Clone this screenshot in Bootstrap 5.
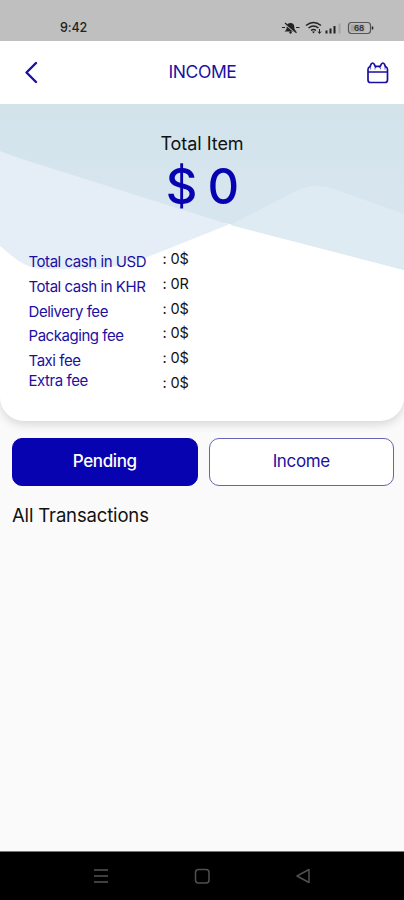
<!DOCTYPE html>
<html lang="en">
<head>
<meta charset="utf-8">
<meta name="viewport" content="width=device-width, initial-scale=1">
<title>Income</title>
<link href="https://cdn.jsdelivr.net/npm/bootstrap@5.3.0/dist/css/bootstrap.min.css" rel="stylesheet">
<style>
  :root { --brand: #0803b0; --ink: #1c10a0; }
  body { font-family: Inter, "Liberation Sans", sans-serif; background: #fafafa; color: #111; }
  .screen { height: 900px; overflow: hidden; }
  .status { height: 41px; background: #bfbfbf; padding: 15px 30px 0 60px; }
  .clock { font-size: 12.5px; line-height: 26px; color: #222; font-weight: 500; letter-spacing: -.1px; }
  .topbar { height: 63px; padding: 0 14px 0 20px; color: var(--ink); z-index: 1; }
  .topbar h1 { font-size: 17.5px; letter-spacing: -.4px; font-weight: 400; line-height: 24px; margin: 0 0 2px -5px; }
  .summary { height: 317px; border-radius: 0 0 24px 24px; box-shadow: 0 4px 8px rgba(0,0,0,.13); overflow: hidden; }
  .total-label { font-size: 18px; line-height: 24px; padding-top: 28px; letter-spacing: -.05px; }
  .total-value { font-size: 49px; line-height: 60px; padding-top: 1px; color: var(--brand); font-weight: 500; letter-spacing: -1px; word-spacing: -1px; }
  .fees { padding: 0 28.500px; margin-top: 32px; font-size: 15px; letter-spacing: -.45px; }
  .fee-names { width: 134px; color: var(--ink); padding-top: 1px; }
  .fee-names div { height: 24.8px; line-height: 24px; }
  .fee-names .last-fee { margin-top: -5px; }
  .fee-values { margin-top: -2px; font-size: 14.5px; letter-spacing: -.1px; }
  .fee-values div { height: 24.8px; line-height: 24px; }
  .tabs { padding: 17px 10px 0 12px; gap: 11px; }
  .tabs .btn { height: 48px; border-radius: 10px; font-size: 17px; letter-spacing: -.35px; padding: 0 0 0; border-color: #6663b4; color: var(--ink); background: #fff; }
  .tabs .btn.chosen { background: var(--brand); border-color: var(--brand); color: #fff; font-weight: 500; }
  .list-title { font-size: 18.5px; line-height: 26px; font-weight: 400; padding: 16px 12px 0; letter-spacing: -.15px; }
  .softkeys { height: 49px; background: #000; border-top: 1px solid #777; padding: 0 92px; }
</style>
</head>
<body>
<div class="screen d-flex flex-column">
  <div class="status d-flex justify-content-between flex-shrink-0">
    <span class="clock">9:42</span>
    <svg width="94" height="24" viewBox="280 15 94 24" fill="none" stroke="#222">
      <path d="M284.500 31.500h12c-1.700-1.200-2.200-2.500-2.200-4.500 0-2.400-1.400-4-3.800-4s-3.800 1.600-3.800 4c0 2-.5 3.300-2.200 4.500z" fill="#222" stroke="none"/>
      <circle cx="290.500" cy="32.500" r="1.200" fill="#222" stroke="none"/>
      <path d="M285.500 24.500l10 8.500" stroke="#bfbfbf" stroke-width="1.200"/>
      <path d="M285 23l11.500 9.700" stroke-width="1.200"/>
      <path d="M282 27.500h3M296 27.500h3.500" stroke-width="1"/>
      <path d="M306 25.500q7.500-6 15 0M308.500 28q5-4 10 0M311 30.500q2.500-2 5 0" stroke-width="1.500"/>
      <path d="M312 31.500h3l-1.500 2z" fill="#222" stroke="none"/>
      <path d="M319.500 29v4M318 31.500l1.500 2 1.500-2" stroke-width="1"/>
      <path d="M326.500 33.500v-3M330.500 33.500v-5M334.500 33.500v-7.500" stroke-width="2"/>
      <path d="M339.500 33.500v-10" stroke="#a3a3a3" stroke-width="2"/>
      <rect x="348.500" y="22.500" width="22" height="11" rx="3" stroke="#555" stroke-width="1.200"/>
      <rect x="350.500" y="24.500" width="14" height="7" rx="1" fill="#a5a5a5" stroke="none"/>
      <path d="M372.500 26.500v3" stroke-width="1.500"/>
      <text x="359" y="31" text-anchor="middle" font-family="Inter, sans-serif" font-size="8" font-weight="600" fill="#333" stroke="none">68</text>
    </svg>
  </div>

  <header class="topbar bg-white position-relative d-flex align-items-center justify-content-between flex-shrink-0">
    <svg width="24" height="24" viewBox="-3 .5 24 24" fill="none" stroke="#1a0fa3" stroke-width="2.400" stroke-linecap="round" stroke-linejoin="round"><path d="M13 2.500L3.500 12l9.500 9.500"/></svg>
    <h1>INCOME</h1>
    <svg width="24" height="24" viewBox="366 60.500 24 24" fill="none" stroke="#1a0fa3" stroke-width="1.700" stroke-linejoin="round" stroke-linecap="round">
      <path d="M370 66c-1.500.5-2 1.500-2 3v10.500q0 2.500 2.500 2.500h14.500q2.500 0 2.500-2.500V69c0-1.500-.5-2.500-2-3M375.500 65.800h4.500M368 71.500h19.500"/>
      <path d="M370 66.500l1-2.800q1.600-2.400 3.200 0l1.300 2.800M380 66.500l1.300-2.800q1.600-2.400 3.200 0l1 2.800"/>
      <path d="M370.500 67.500v1M375 67.500v1M380.500 67.500v1M385 67.500v1" stroke="#7b75c9" stroke-width="1.200"/>
    </svg>
  </header>

  <section class="summary bg-white position-relative flex-shrink-0">
    <svg class="position-absolute top-0 start-0" width="404" height="170" viewBox="0 104 404 170">
      <defs><linearGradient id="sky" x1="0" y1="0" x2="0" y2="1"><stop offset="0" stop-color="#d2e3ea"/><stop offset=".5" stop-color="#d6e5ee"/><stop offset="1" stop-color="#d7e5ef"/></linearGradient></defs>
      <path d="M0 104h404v166L230 224 0 200z" fill="url(#sky)"/>
      <path d="M230 225L296 191Q314 182 334 189L404 214V270z" fill="#deebf3"/>
      <path d="M0 151Q20 159 60 171L229 224.500 150 256Q130 264 100 269H40Q25 267 12 256L0 246z" fill="#e5eef7"/>
    </svg>
    <div class="position-relative">
      <div class="total-label text-center">Total Item</div>
      <div class="total-value text-center">$ 0</div>
      <div class="fees d-flex">
        <div class="fee-names">
          <div>Total cash in USD</div><div>Total cash in KHR</div><div>Delivery fee</div><div>Packaging fee</div><div>Taxi fee</div><div class="last-fee">Extra fee</div>
        </div>
        <div class="fee-values">
          <div>: 0$</div><div>: 0R</div><div>: 0$</div><div>: 0$</div><div>: 0$</div><div>: 0$</div>
        </div>
      </div>
    </div>
  </section>

  <div class="tabs d-flex">
    <button class="btn chosen flex-fill w-50" type="button">Pending</button>
    <button class="btn flex-fill w-50" type="button">Income</button>
  </div>
  <h2 class="list-title m-0">All Transactions</h2>

  <nav class="softkeys d-flex justify-content-between align-items-center mt-auto flex-shrink-0">
    <svg width="18" height="18" fill="none" stroke="#555" stroke-width="1.500"><path d="M2 3h14M2 9h14M2 15h14"/></svg>
    <svg width="18" height="18" fill="none" stroke="#505050" stroke-width="1.500"><rect x="2.500" y="2.500" width="13.500" height="13.500" rx="3"/></svg>
    <svg width="18" height="18" fill="none" stroke="#505050" stroke-width="1.500" stroke-linejoin="round"><path d="M15 2.500v13L3 9z"/></svg>
  </nav>
</div>
<script src="https://cdn.jsdelivr.net/npm/bootstrap@5.3.0/dist/js/bootstrap.bundle.min.js"></script>
</body>
</html>
